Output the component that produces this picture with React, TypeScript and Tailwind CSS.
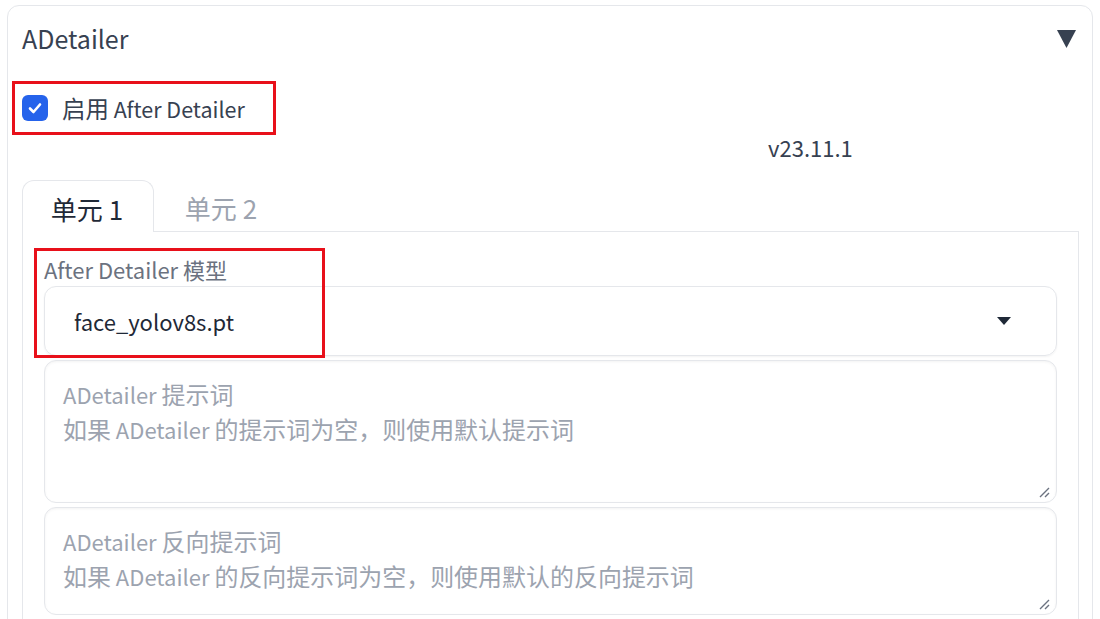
import React from "react";

const font = { fontFamily: '"Noto Sans CJK SC", "Noto Sans", sans-serif' };

// the CJK glyphs in the screenshot run a little larger than the Latin ones
const Mixed = ({ text }: { text: string }) => (
  <>
    {text.split(/([\u4e00-\u9fff\uff0c]+)/).map((part, i) =>
      /[\u4e00-\u9fff\uff0c]/.test(part) ? (
        <span key={i} className="text-[1.09em]">
          {part}
        </span>
      ) : (
        <span key={i}>{part}</span>
      )
    )}
  </>
);

const ResizeGrip = () => (
  <svg className="absolute right-[6px] bottom-[4px]" width="12" height="12" viewBox="0 0 12 12">
    <path d="M11 2 L2 11 M11 7 L7 11" stroke="#6b7280" strokeWidth="1.4" />
  </svg>
);

const PromptBox = ({ title, hint, height }: { title: string; hint: string; height: string }) => (
  <div
    className={`relative ${height} rounded-xl border border-[#e5e7eb] bg-white pl-[18px] pt-[15px] text-[22px] leading-[35px] text-[#9ca3af] shadow-[inset_0_1px_3px_rgba(0,0,0,0.05)]`}
  >
    <div className="h-[35px]">
      <Mixed text={title} />
    </div>
    <div className="h-[35px]">
      <Mixed text={hint} />
    </div>
    <ResizeGrip />
  </div>
);

export default function App() {
  return (
    <div className="relative h-[619px] w-[1100px] overflow-hidden bg-white pl-[7px] pt-[5px]" style={font}>
      <div className="w-[1086px] h-[700px] rounded-xl border border-[#e5e7eb] pl-[14px]">
        {/* header */}
        <div className="flex h-[66px] items-center justify-between pr-[16px]">
          <span className="text-[25px] text-[#374151]">ADetailer</span>
          <svg width="19" height="18" viewBox="0 0 19 18">
            <path d="M0 0 H19 L9.5 18 Z" fill="#374151" />
          </svg>
        </div>

        {/* enable */}
        <div className="flex h-[76px] items-center gap-[14px] pb-[4px]">
          <div className="flex h-[26px] w-[26px] items-center justify-center rounded-[6px] bg-[#2563eb]">
            <svg width="16" height="16" viewBox="0 0 16 16">
              <path d="M3 8.5 L6.5 12 L13 4.5" stroke="white" strokeWidth="2.6" fill="none" strokeLinecap="round" strokeLinejoin="round" />
            </svg>
          </div>
          <span className="text-[21.5px] leading-[30px] text-[#374151]">
            <Mixed text="启用 After Detailer" />
          </span>
        </div>

        <div className="-mt-[16px] pl-[746px] text-[22px] leading-[30px] text-[#374151]">v23.11.1</div>

        {/* tabs */}
        <div className="mt-[18px] flex h-[52px] pr-[13px]">
          <div className="flex w-[132px] items-center justify-center rounded-t-xl border border-b-0 border-[#e5e7eb] pr-[2px] pt-[4px] text-[26px] text-[#1f2937]">
            单元 1
          </div>
          <div className="flex w-[134px] items-center justify-center border-b border-[#e5e7eb] pt-[4px] text-[26px] text-[#9ca3af]">
            单元 2
          </div>
          <div className="flex-1 border-b border-[#e5e7eb]" />
        </div>

        {/* panel */}
        <div className="mr-[13px] h-[500px] border border-t-0 border-[#e5e7eb] px-[21px] pt-[20px]">
          <div className="text-[22px] leading-[34px] text-[#6b7280]">After Detailer 模型</div>
          <div className="flex h-[70px] items-center justify-between rounded-xl border border-[#e5e7eb] pl-[29px] pr-[45px] shadow-[0_1px_2px_rgba(0,0,0,0.05)]">
            <span className="text-[22px] text-[#1f2937]">face_yolov8s.pt</span>
            <svg width="14" height="8" viewBox="0 0 14 8">
              <path d="M0 0 H14 L7 8 Z" fill="#1f2937" />
            </svg>
          </div>
          <div className="mt-[4px] flex flex-col gap-[4px]">
            <PromptBox title="ADetailer 提示词" hint="如果 ADetailer 的提示词为空，则使用默认提示词" height="h-[143px]" />
            <PromptBox title="ADetailer 反向提示词" hint="如果 ADetailer 的反向提示词为空，则使用默认的反向提示词" height="h-[108px]" />
          </div>
        </div>
      </div>

      {/* annotation boxes */}
      <div className="absolute left-[12px] top-[81px] h-[54px] w-[264px] border-[3px] border-[#e8101a]" />
      <div className="absolute left-[34px] top-[248px] h-[110px] w-[291px] border-[3px] border-[#e8101a]" />
    </div>
  );
}
